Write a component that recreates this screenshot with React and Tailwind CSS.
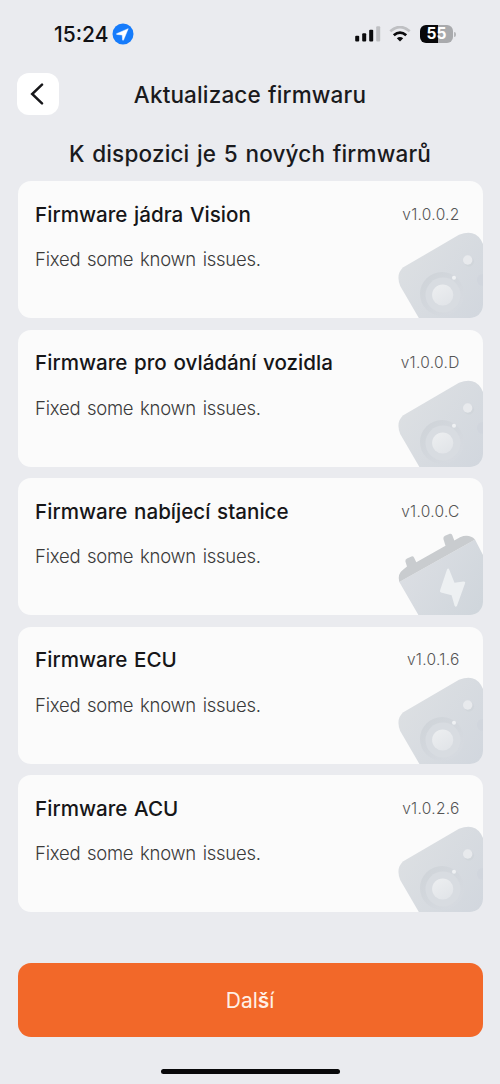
import React from "react";

const items = [
  { title: "Firmware jádra Vision", version: "v1.0.0.2", art: "camera" },
  { title: "Firmware pro ovládání vozidla", version: "v1.0.0.D", art: "camera" },
  { title: "Firmware nabíjecí stanice", version: "v1.0.0.C", art: "battery" },
  { title: "Firmware ECU", version: "v1.0.1.6", art: "camera" },
  { title: "Firmware ACU", version: "v1.0.2.6", art: "camera" },
];

function CameraArt({ id }) {
  return (
    <svg width="86" height="88" viewBox="0 0 86 88" className="absolute right-[-0.5px] bottom-[-0.5px]" aria-hidden="true">
      <defs>
        <linearGradient id={id + "b"} x1="0" y1="0.2" x2="1" y2="0.9">
          <stop offset="0" stopColor="#dde0e3" />
          <stop offset="1" stopColor="#d2d7de" />
        </linearGradient>
        <linearGradient id={id + "r"} x1="0" y1="0" x2="0.8" y2="0.8">
          <stop offset="0" stopColor="#cbd0d5" />
          <stop offset="1" stopColor="#d6dae0" />
        </linearGradient>
        <linearGradient id={id + "l"} x1="0.2" y1="0" x2="0.8" y2="1">
          <stop offset="0" stopColor="#eceef0" />
          <stop offset="1" stopColor="#e1e4e8" />
        </linearGradient>
      </defs>
      <path d="M23 89 L3.2 55 Q-1.5 43 6.3 36.3 L62 3.8 Q77 -2 84 9 L86 13 V89 Z" fill={`url(#${id}b)`} />
      <circle cx="45" cy="63" r="22" fill={`url(#${id}r)`} opacity="0.75" />
      <circle cx="46" cy="64" r="17.5" fill="#d8dce1" />
      <circle cx="45.7" cy="64" r="10.6" fill={`url(#${id}l)`} />
      <circle cx="57" cy="46.8" r="2" fill="#eff1f3" />
      <circle cx="72" cy="30.5" r="5" fill="#d0d4da" opacity="0.8" />
      <circle cx="70.7" cy="29" r="4.7" fill="#e8eaed" />
      <circle cx="86" cy="49" r="6" fill="#cfd4dc" opacity="0.6" />
    </svg>
  );
}

function BatteryArt({ id }) {
  return (
    <svg width="86" height="88" viewBox="0 0 86 88" className="absolute right-[-0.5px] bottom-[-0.5px]" aria-hidden="true">
      <defs>
        <linearGradient id={id + "b"} x1="0.1" y1="0.3" x2="1" y2="0.8">
          <stop offset="0" stopColor="#dbdee3" />
          <stop offset="1" stopColor="#d0d6dc" />
        </linearGradient>
      </defs>
      <path d="M22 88 L2.3 54 L74.7 13.5 L78 11.5 L86 27 V88 Z" fill={`url(#${id}b)`} />
      <path
        d="M2.3 54 Q0 46 6.3 41.5 L10 38.5 L8.4 33.5 Q8 31.5 10 30.5 L14.5 28.4 Q16.3 28 17 29.5 L19.3 34.3 L48.5 17.7 L46.4 11 Q46 8.7 48 7.7 L52.8 5.8 Q54.4 5.3 55.2 7 L57.3 12.4 L63 9.3 Q72 5.5 78 11.5 L74.7 13.5 Z"
        fill="#c9cccf"
      />
      <path
        d="M50 41.5 Q51.3 39.3 52.4 42 L57.5 54.8 L66.5 53.4 Q68.9 53.4 67.9 55.7 L60 77.8 Q58.7 80 57.5 77.5 L54.6 67.2 L44 64.6 Q42.3 63.9 43.2 62 Z"
        fill="#edf0f2"
      />
    </svg>
  );
}

function FirmwareCard({ item, id }) {
  return (
    <article className="relative h-[137px] shrink-0 overflow-hidden rounded-[13px] bg-[#fbfbfb] pr-[23px] pl-[17.5px]">
      <div className="flex items-center justify-between pt-[19px]">
        <h2 className="text-[20.6px] leading-[28px] font-medium [word-spacing:1.2px] whitespace-nowrap text-[#161618]">
          {item.title}
        </h2>
        <span className="pt-[0.5px] text-[15.5px] leading-[28px] font-light tracking-[0.3px] text-[#555]">{item.version}</span>
      </div>
      <p className="mt-[18.5px] text-[18.5px] leading-[24px] font-light tracking-[-0.25px] [word-spacing:1.7px] whitespace-nowrap text-[#3a3a3a]">
        Fixed some known issues.
      </p>
      {item.art === "camera" ? <CameraArt id={id} /> : <BatteryArt id={id} />}
    </article>
  );
}

function StatusBar() {
  return (
    <div className="flex h-[68px] shrink-0 items-center justify-between pr-[44px] pl-[54px]">
      <div className="flex items-center gap-[3px]">
        <span className="w-[55px] pt-px text-[21px] leading-[24px] font-medium text-[#111114]">15:24</span>
        <svg width="22" height="22" viewBox="0 0 22 22" aria-hidden="true">
          <circle cx="11" cy="11" r="10.5" fill="#157bfb" />
          <path d="M16.2 5.7 L4.6 10.7 Q4.2 11.3 4.9 11.5 L10.2 11.9 L10.6 17.1 Q11 17.8 11.5 17.1 Z" fill="#fff" stroke="#fff" strokeWidth="0.5" strokeLinejoin="round" />
        </svg>
      </div>
      <div className="flex items-center">
        <svg width="26" height="16" viewBox="0 0 26 16" className="mr-[-1px]" aria-hidden="true">
          <rect x="0.2" y="9.7" width="4" height="5.8" rx="1" fill="#0b0b0d" />
          <rect x="7.2" y="7.3" width="4" height="8.2" rx="1" fill="#0b0b0d" />
          <rect x="14.2" y="3.8" width="4" height="11.7" rx="1" fill="#0b0b0d" />
          <rect x="21.2" y="0.2" width="4" height="15.3" rx="1" fill="#bfc0c3" />
        </svg>
        <svg width="22" height="16" viewBox="0 0 22 16" className="ml-[9px]" aria-hidden="true">
          <path d="M1.3 5.3 Q11 -3.2 20.7 5.3" fill="none" stroke="#bfc0c3" strokeWidth="2.7" />
          <path d="M4.8 9.3 Q11 4 17.2 9.3" fill="none" stroke="#0b0b0d" strokeWidth="2.8" />
          <path d="M7.8 12.3 Q11 9.7 14.2 12.3 L11 15.5 Z" fill="#0b0b0d" />
        </svg>
        <div className="ml-[9px] flex items-center gap-px">
          <div className="flex h-[18px] w-[33px] items-center justify-center rounded-[6px] bg-linear-to-r from-[#08080a] from-55% to-[#a9aaad] to-55% text-[15.5px] leading-none font-bold text-white">
            55
          </div>
          <div className="h-[5px] w-[2px] rounded-r-full bg-[#b5b6b9]" />
        </div>
      </div>
    </div>
  );
}

export default function App() {
  return (
    <main className="flex h-[1084px] w-[500px] flex-col overflow-hidden bg-[#eaebef] font-['Inter','Liberation_Sans',sans-serif]">
      <StatusBar />
      <header className="grid h-[52px] shrink-0 grid-cols-[42px_1fr_42px] items-center pr-[17.5px] pl-[17.4px]">
        <button className="flex size-[42px] items-center justify-center rounded-[12px] bg-white" aria-label="Zpět">
          <svg width="14" height="22" viewBox="0 0 14 22" className="mr-[3px]" fill="none" stroke="#17171a" strokeWidth="2.5" strokeLinecap="round" aria-hidden="true">
            <path d="M12 1.7 L2.2 11 L12 20.3" />
          </svg>
        </button>
        <h1 className="mt-px text-center text-[22.5px] leading-[30px] font-medium tracking-[0.15px] [word-spacing:1px] text-[#1a1a1d]">
          Aktualizace firmwaru
        </h1>
      </header>
      <p className="mt-[19px] h-[30px] shrink-0 text-center text-[22.5px] leading-[30px] font-medium tracking-[0.17px] [word-spacing:1.4px] whitespace-nowrap text-[#1a1a1d]">
        K dispozici je 5 nových firmwarů
      </p>
      <section className="mt-[12.4px] flex flex-col gap-[11.5px] pr-[17.4px] pl-[17.6px]">
        {items.map((item, i) => (
          <FirmwareCard key={item.title} item={item} id={"fw" + i} />
        ))}
      </section>
      <div className="mt-[51px] pr-[17.4px] pl-[17.6px]">
        <button className="h-[74px] w-full rounded-[13px] bg-[#f26829] text-[21px] font-normal text-[#fff0e6]">
          Dal<span className="font-semibold">š</span>í
        </button>
      </div>
      <div className="mt-[31.5px] ml-[160.5px] h-[5.5px] w-[179px] shrink-0 rounded-full bg-[#08080a]" />
    </main>
  );
}
